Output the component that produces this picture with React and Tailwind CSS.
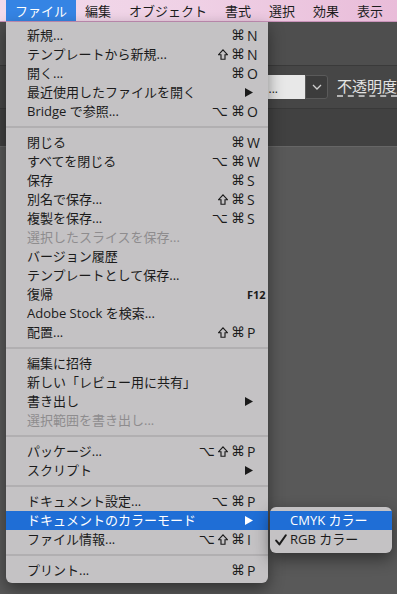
import React from 'react';

const LABEL_FONT = { fontFamily: '"Open Sans", "Noto Sans CJK JP", sans-serif' };
const SYM_FONT = { fontFamily: '"DejaVu Sans", "Noto Sans CJK JP", sans-serif' };

const items = [
  { l: '新規...', m: ['⌘'], k: 'N' },
  { l: 'テンプレートから新規...', m: ['⇧', '⌘'], k: 'N' },
  { l: '開く...', m: ['⌘'], k: 'O' },
  { l: '最近使用したファイルを開く', sub: true },
  { l: 'Bridge で参照...', m: ['⌥', '⌘'], k: 'O' },
  'sep',
  { l: '閉じる', m: ['⌘'], k: 'W' },
  { l: 'すべてを閉じる', m: ['⌥', '⌘'], k: 'W' },
  { l: '保存', m: ['⌘'], k: 'S' },
  { l: '別名で保存...', m: ['⇧', '⌘'], k: 'S' },
  { l: '複製を保存...', m: ['⌥', '⌘'], k: 'S' },
  { l: '選択したスライスを保存...', dis: true },
  { l: 'バージョン履歴' },
  { l: 'テンプレートとして保存...' },
  { l: '復帰', k: 'F12', small: true },
  { l: 'Adobe Stock を検索...' },
  { l: '配置...', m: ['⇧', '⌘'], k: 'P' },
  'sep',
  { l: '編集に招待' },
  { l: '新しい「レビュー用に共有」' },
  { l: '書き出し', sub: true },
  { l: '選択範囲を書き出し...', dis: true },
  'sep',
  { l: 'パッケージ...', m: ['⌥', '⇧', '⌘'], k: 'P' },
  { l: 'スクリプト', sub: true },
  'sep',
  { l: 'ドキュメント設定...', m: ['⌥', '⌘'], k: 'P' },
  { l: 'ドキュメントのカラーモード', sub: true, hl: true },
  { l: 'ファイル情報...', m: ['⌥', '⇧', '⌘'], k: 'I' },
  'sep',
  { l: 'プリント...', m: ['⌘'], k: 'P' },
];

function Arrow({ white }) {
  return (
    <svg width="8" height="9" viewBox="0 0 8 9" className="mr-[15px]">
      <path d="M0 0 L8 4.5 L0 9 Z" fill={white ? '#ffffff' : '#1a1a1a'} />
    </svg>
  );
}

function Shift({ color }) {
  return (
    <svg width="10" height="11" viewBox="0 0 10 11">
      <path
        d="M5 0.9 L9.4 5.7 L7 5.7 L7 10.2 L3 10.2 L3 5.7 L0.6 5.7 Z"
        fill="none"
        stroke={color}
        strokeWidth="1.15"
        strokeLinejoin="miter"
      />
    </svg>
  );
}

function Row({ it }) {
  const color = it.hl ? 'text-white bg-[#1f6ed6]' : it.dis ? 'text-[#8e8c8e]' : 'text-[#1b1b1b]';
  const stroke = it.hl ? '#ffffff' : '#1b1b1b';
  return (
    <div className={`flex h-[19px] items-center pl-[21px] ${color}`}>
      <span className="flex-1 whitespace-nowrap text-[13px] leading-[19px]" style={LABEL_FONT}>
        {it.l}
      </span>
      {it.sub && <Arrow white={it.hl} />}
      {it.k && (
        <>
          <span className="mr-[2px] flex items-center justify-end gap-[3px] text-[14px] leading-[19px]" style={SYM_FONT}>
            {(it.m || []).map((s, i) =>
              s === '⇧' ? <Shift key={i} color={stroke} /> : <span key={i}>{s}</span>
            )}
          </span>
          <span
            className={`w-[21px] whitespace-nowrap leading-[19px] ${it.small ? 'text-[11px] font-bold' : 'text-[14px]'}`}
            style={LABEL_FONT}
          >
            {it.k}
          </span>
        </>
      )}
    </div>
  );
}

export default function App() {
  const top = ['ファイル', '編集', 'オブジェクト', '書式', '選択', '効果', '表示'];
  return (
    <div className="relative h-[594px] w-[397px] overflow-hidden bg-[#595959]" style={LABEL_FONT}>
      {/* menubar */}
      <div className="flex h-[22px] items-stretch border-b border-[#c993b9] bg-gradient-to-r from-[#f2dbeb] via-[#efd0e5] to-[#e9bcd9] pl-[6px]">
        {top.map((t, i) => (
          <div
            key={t}
            className={`flex items-center px-[9px] text-[13px] leading-none ${i === 0 ? 'bg-[#3584e4] text-white' : 'text-[#1d1d1d]'}`}
            style={{ fontFamily: '"Noto Sans CJK JP", sans-serif' }}
          >
            {t}
          </div>
        ))}
      </div>

      {/* application bar */}
      <div className="h-[43px] bg-[#4e4e4e]" />

      {/* control bar */}
      <div className="flex h-[43px] items-center overflow-hidden border-t border-[#3a3a3a] bg-[#464646] pl-[180px]">
        <div className="flex h-[24px] w-[125px] shrink-0 items-end justify-end rounded-l-[3px] bg-[#e8e8e8] pb-[4px] pr-[27px] text-[12px] leading-none text-[#222]">
          ...
        </div>
        <div className="flex h-[24px] w-[23px] shrink-0 items-center justify-center rounded-r-[3px] border border-[#5a5a5a] bg-[#3c3c3c]">
          <svg width="10" height="6" viewBox="0 0 10 6">
            <path d="M1 1 L5 5 L9 1" fill="none" stroke="#cfcfcf" strokeWidth="1.3" />
          </svg>
        </div>
        <span
          className="ml-[9px] shrink-0 whitespace-nowrap border-b-2 border-dashed border-[#b5b5b5] text-[15px] leading-[18px] text-[#e4e4e4]"
          style={{ fontFamily: '"Noto Sans CJK JP", sans-serif' }}
        >
          不透明度
        </span>
      </div>

      {/* tab bar */}
      <div className="h-[38px] border-t border-[#393939] bg-[#414141]" />
      <div className="h-px bg-[#666666]" />

      {/* File menu */}
      <div className="absolute left-[6px] top-[22px] w-[262px] rounded-b-[6px] bg-[#c4c2c4] pb-[3px] pt-[4px] shadow-[0_6px_16px_rgba(0,0,0,0.45)]">
        {items.map((it, i) =>
          it === 'sep' ? (
            <div key={i} className="flex h-[12px] items-center">
              <div className="h-[2px] w-full bg-[#b1afb1]" />
            </div>
          ) : (
            <Row key={i} it={it} />
          )
        )}
      </div>

      {/* submenu */}
      <div className="absolute left-[270px] top-[507px] w-[122px] rounded-[6px] bg-[#c4c2c4] py-[4px] shadow-[0_6px_16px_rgba(0,0,0,0.45)]">
        <div className="flex h-[19px] items-center bg-[#1f6ed6] pl-[20px] text-[13px] leading-[19px] text-white">
          CMYK カラー
        </div>
        <div className="flex h-[19px] items-center pl-[5px] text-[13px] leading-[19px] text-[#1b1b1b]">
          <svg width="12" height="12" viewBox="0 0 12 12" className="mr-[3px]">
            <path d="M1.2 6.6 L4.4 10.4 L10.8 1.2" fill="none" stroke="#1b1b1b" strokeWidth="2" strokeLinecap="round" strokeLinejoin="round" />
          </svg>
          RGB カラー
        </div>
      </div>
    </div>
  );
}
